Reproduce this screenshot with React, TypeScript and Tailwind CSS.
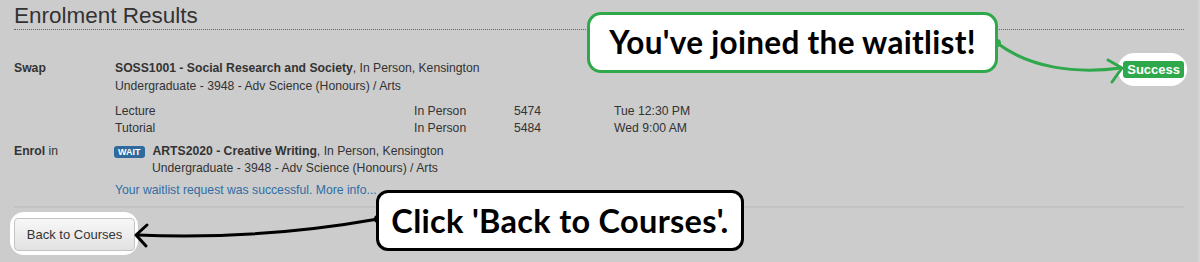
import React from "react";

type Section = { kind: string; place: string; id: string; time: string };

const sections: Section[] = [
  { kind: "Lecture", place: "In Person", id: "5474", time: "Tue 12:30 PM" },
  { kind: "Tutorial", place: "In Person", id: "5484", time: "Wed 9:00 AM" },
];

function Callout({
  text,
  className,
}: {
  text: string;
  className: string;
}) {
  return (
    <div
      className={`absolute flex items-center justify-center bg-white border-[3px] font-['Lato',sans-serif] font-bold text-black tracking-[0.3px] ${className}`}
    >
      {text}
    </div>
  );
}

export default function App() {
  return (
    <div className="relative w-[1200px] h-[262px] overflow-hidden bg-[#cccccc] border-r-2 border-[#d5d5d5] font-['Liberation_Sans',Arial,sans-serif] text-[12.2px] leading-[17px] text-[#333]">
      <div className="px-[14px]">
        {/* Title */}
        <h1 className="pt-[3px] text-[22.5px] leading-[26px] border-b border-dotted border-[#666]">
          Enrolment Results
        </h1>

        {/* Swap row */}
        <div className="flex mt-[30px]">
          <div className="w-[101px] shrink-0 font-bold">Swap</div>
          <div className="flex-1">
            <div className="flex justify-between">
              <div>
                <b>SOSS1001 - Social Research and Society</b>, In Person, Kensington
              </div>
              <span className="relative mt-px h-[17px]">
                <span className="absolute -left-[5px] -right-[3px] -top-[8px] -bottom-[8px] bg-white rounded-[16px]" />
                <span className="relative block bg-[#2ea84a] text-white font-bold text-[13px] rounded-[3px] px-[4px] leading-[17px]">
                  Success
                </span>
              </span>
            </div>
            <div>Undergraduate - 3948 - Adv Science (Honours) / Arts</div>
            <div className="mt-[8px]">
              {sections.map((s) => (
                <div key={s.id} className="grid grid-cols-[299px_100px_100px_1fr]">
                  <span>{s.kind}</span>
                  <span>{s.place}</span>
                  <span>{s.id}</span>
                  <span>{s.time}</span>
                </div>
              ))}
            </div>
          </div>
        </div>

        {/* Enrol row */}
        <div className="flex mt-[6px]">
          <div className="w-[101px] shrink-0">
            <b>Enrol</b> in
          </div>
          <div className="flex-1">
            <div className="flex items-center -ml-px">
              <span className="bg-[#2f6a9e] text-white font-bold text-[9px] leading-[12px] rounded-[3px] px-[4px] mr-[8px]">
                WAIT
              </span>
              <span>
                <b>ARTS2020 - Creative Writing</b>, In Person, Kensington
              </span>
            </div>
            <div className="pl-[37px]">Undergraduate - 3948 - Adv Science (Honours) / Arts</div>
            <a className="block mt-[5px] text-[#2f6ea6]">
              Your waitlist request was successful. More info...
            </a>
          </div>
        </div>

        <div className="mt-[7px] h-[2px] bg-[#c2c2c2]" />

        {/* Back button */}
        <div className="relative inline-block mt-[10px]">
          <span className="absolute -left-[4px] -right-[3px] -top-[6px] -bottom-[4px] bg-white rounded-[14px]" />
          <button className="relative h-[33px] w-[121px] rounded-[4px] border border-[#c4c4c4] bg-gradient-to-b from-[#f7f7f7] to-[#e2e2e2] text-[13px] text-[#333]">
            Back to Courses
          </button>
        </div>
      </div>

      {/* Annotations */}
      <svg className="absolute inset-0" width="1200" height="262" viewBox="0 0 1200 262" fill="none">
        <path d="M997 43 C 1030 68, 1075 74, 1121 68" stroke="#2ea84a" strokeWidth="3" strokeLinecap="round" />
        <path d="M1108 60 L1122 68 L1112 82" stroke="#2ea84a" strokeWidth="3" strokeLinecap="round" strokeLinejoin="round" />
        <circle cx="997" cy="43" r="4" fill="#2ea84a" />
        <path d="M378 219 Q 260 240 137 235" stroke="#000" strokeWidth="3" strokeLinecap="round" />
        <path d="M147 225 L136 235 L146 246" stroke="#000" strokeWidth="3" strokeLinecap="round" strokeLinejoin="round" />
        <circle cx="378" cy="219" r="4" fill="#000" />
      </svg>
      <Callout
        text="You've joined the waitlist!"
        className="left-[587px] top-[12px] w-[411px] h-[61px] rounded-[14px] border-[#2ea84a] text-[31.5px]"
      />
      <Callout
        text="Click 'Back to Courses'."
        className="left-[376px] top-[190px] w-[368px] h-[61px] rounded-[12px] border-black text-[32.5px]"
      />
    </div>
  );
}
